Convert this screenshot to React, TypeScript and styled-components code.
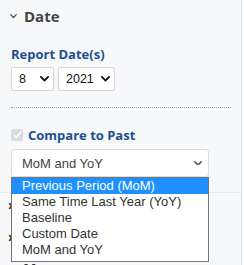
import * as React from "react";
import styled, { createGlobalStyle } from "styled-components";

const GlobalStyle = createGlobalStyle`
  html, body {
    margin: 0;
    padding: 0;
    background: #f7f8fa;
  }
`;

const Panel = styled.div`
  position: relative;
  width: 241px;
  height: 265px;
  overflow: hidden;
  border-right: 1px solid #e3e5e8;
  background: #f7f8fa;
  font-family: "Open Sans", sans-serif;
`;

const SectionHead = styled.div`
  display: flex;
  align-items: center;
  gap: 7px;
  padding: 6px 0 0 10px;
  height: 20px;
  font-size: 15px;
  font-weight: 700;
  color: #444;
`;

const Body = styled.div`
  padding: 0 11px;
`;

const Label = styled.div<{ $top: number }>`
  display: flex;
  align-items: center;
  gap: 5px;
  margin-top: ${(p) => p.$top}px;
  font-size: 13px;
  font-weight: 700;
  color: #1d4f91;
  height: 18px;
`;

const Row = styled.div`
  display: flex;
  gap: 4px;
  margin-top: 4px;
`;

const SelectBox = styled.div<{ $w: number }>`
  box-sizing: border-box;
  width: ${(p) => p.$w}px;
  height: 24px;
  display: flex;
  align-items: center;
  justify-content: space-between;
  padding: 0 4px 0 7px;
  background: #fff;
  border: 1px solid #d6d6d6;
  border-radius: 2px;
  font-family: "Liberation Sans", Arial, sans-serif;
  font-size: 12.5px;
  color: #111;
`;

const Divider = styled.div`
  margin: 16px 0 0 0;
  width: 220px;
  border-top: 1px dotted #a8a8a8;
`;

const Check = styled.div`
  width: 12px;
  height: 12px;
  border-radius: 2px;
  background: #d9dbde;
  display: flex;
  align-items: center;
  justify-content: center;
`;

const WideSelect = styled.div`
  box-sizing: border-box;
  width: 198px;
  height: 28px;
  margin-top: 5px;
  display: flex;
  align-items: center;
  justify-content: space-between;
  padding: 0 6px 0 10px;
  background: #fff;
  border: 1px solid #dcdcdc;
  border-radius: 3px;
  font-family: "Liberation Sans", Arial, sans-serif;
  font-size: 13px;
  color: #444;
`;

const Hidden = styled.div`
  margin-top: 15px;
  border-top: 1px solid #e8e9ec;
`;

const HiddenRow = styled.div`
  display: flex;
  align-items: flex-start;
  gap: 10px;
  height: 32px;
  padding: 2px 0 0 8px;
  box-sizing: border-box;
  line-height: 20px;
  font-size: 14px;
  font-weight: 700;
  color: #333;
`;

const Menu = styled.div`
  position: absolute;
  left: 11px;
  top: 177px;
  width: 196px;
  border: 1px solid #767676;
  background: #fff;
  padding-bottom: 3px;
  font-family: "Liberation Sans", Arial, sans-serif;
  font-size: 13px;
`;

const Option = styled.div<{ $active?: boolean }>`
  height: 16px;
  line-height: 16px;
  padding-left: 10px;
  white-space: nowrap;
  color: ${(p) => (p.$active ? "#fff" : "#333")};
  background: ${(p) => (p.$active ? "#1e90ff" : "transparent")};
`;

const Chevron = ({ size = 9, color = "#111", w = 2 }: { size?: number; color?: string; w?: number }) => (
  <svg width={size} height={size * 0.6} viewBox="0 0 10 6">
    <path d="M1 1 L5 5 L9 1" fill="none" stroke={color} strokeWidth={w} strokeLinecap="round" strokeLinejoin="round" />
  </svg>
);

const options = [
  "Previous Period (MoM)",
  "Same Time Last Year (YoY)",
  "Baseline",
  "Custom Date",
  "MoM and YoY",
];

export default function App() {
  return (
    <Panel>
      <GlobalStyle />
      <SectionHead>
        <Chevron size={7} color="#444" w={1.6} />
        Date
      </SectionHead>
      <Body>
        <Label $top={19}>Report Date(s)</Label>
        <Row>
          <SelectBox $w={43}>
            8
            <Chevron />
          </SelectBox>
          <SelectBox $w={57}>
            2021
            <Chevron />
          </SelectBox>
        </Row>
        <Divider />
        <Label $top={18}>
          <Check>
            <svg width="9" height="8" viewBox="0 0 9 8">
              <path d="M1 4 L3.5 6.5 L8 1" fill="none" stroke="#fff" strokeWidth="1.6" />
            </svg>
          </Check>
          Compare to Past
        </Label>
        <WideSelect>
          MoM and YoY
          <Chevron size={8} color="#555" />
        </WideSelect>
      </Body>
      <Hidden>
        <HiddenRow>›<span>Metrics</span></HiddenRow>
        <HiddenRow>›<span>Filters</span></HiddenRow>
        <HiddenRow>›<span>More</span></HiddenRow>
      </Hidden>
      <Menu>
        {options.map((o, i) => (
          <Option key={o} $active={i === 0}>
            {o}
          </Option>
        ))}
      </Menu>
    </Panel>
  );
}
